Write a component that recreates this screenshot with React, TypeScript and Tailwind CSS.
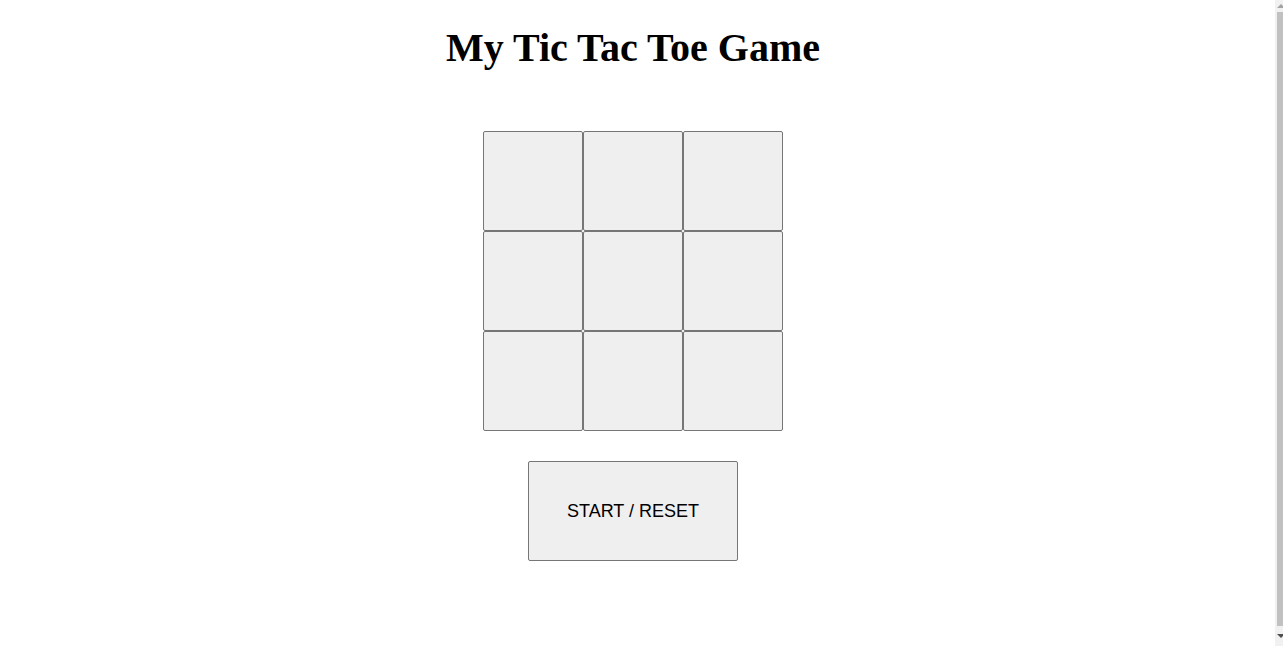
const CELL = 'w-[100px] h-[100px] bg-[#efefef] border border-[#767676] rounded-[2px]'

export default function App() {
  const cells = Array.from({ length: 9 }, (_, i) => i)

  return (
    <div className="h-[646px] overflow-hidden bg-white flex font-['Liberation_Sans',Arial,sans-serif]">
      <main className="flex-1 pr-[9px] flex flex-col items-center">
        <h1 className="mt-[25px] text-[40px] leading-[46px] font-bold text-black font-['Liberation_Serif','Times_New_Roman',serif]">
          My Tic Tac Toe Game
        </h1>

        <div className="mt-[60px] grid grid-cols-[repeat(3,100px)]">
          {cells.map(i => (
            <button key={i} className={CELL} />
          ))}
        </div>

        <button className="mt-[30px] w-[210px] h-[100px] bg-[#efefef] border border-[#767676] rounded-[2px] text-[18px] text-black">
          START / RESET
        </button>
      </main>

      {/* scrollbar */}
      <div className="w-[8px] bg-[#f1f1f1] flex flex-col">
        <div className="h-[12px] flex items-center justify-end">
          <div className="w-0 h-0 border-l-[4px] border-r-[4px] border-b-[4px] border-l-transparent border-r-transparent border-b-[#a3a3a3] mr-[-2px]" />
        </div>
        <div className="flex-1 ml-[2px] bg-[#c1c1c1]" />
        <div className="h-[20px] flex items-center justify-end">
          <div className="w-0 h-0 border-l-[4px] border-r-[4px] border-t-[4px] border-l-transparent border-r-transparent border-t-[#505050] mr-[-2px]" />
        </div>
      </div>
    </div>
  )
}
